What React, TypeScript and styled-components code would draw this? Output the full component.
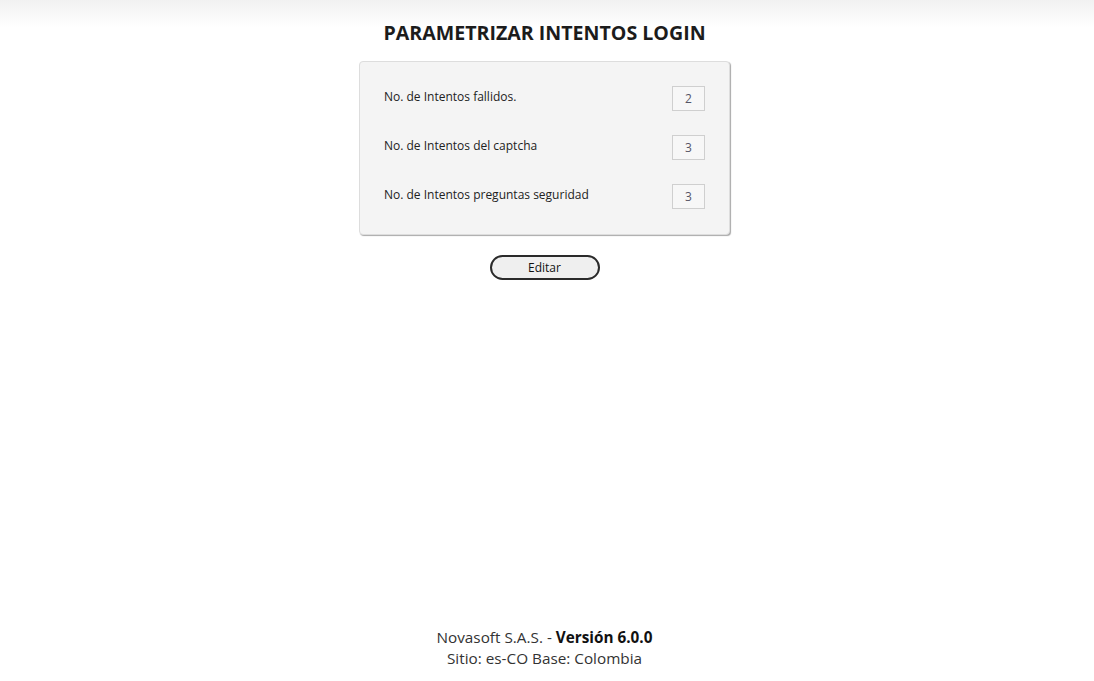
import React from "react";
import styled, { createGlobalStyle } from "styled-components";

const GlobalStyle = createGlobalStyle`
  html, body {
    margin: 0;
    padding: 0;
    background: #ffffff;
    font-family: "Open Sans", "Noto Sans", Arial, sans-serif;
    color: #222222;
  }
`;

const Page = styled.div`
  min-height: 681px;
  padding-right: 5px;
  box-sizing: border-box;
  display: flex;
  flex-direction: column;
  align-items: center;
  background: linear-gradient(to bottom, #f1f1f1 0px, #ffffff 28px);
`;

const Title = styled.h1`
  margin: 19px 0 0;
  font-size: 19.6px;
  font-weight: 700;
  color: #1c1c1c;
`;

const Panel = styled.ul`
  list-style: none;
  margin: 15px 0 0;
  padding: 24px 24px 25px 24px;
  width: 371px;
  box-sizing: border-box;
  background: #f4f4f4;
  border: 1px solid #dddddd;
  border-radius: 4px;
  box-shadow: 1px 1px 1px #a9a9a9;
  display: flex;
  flex-direction: column;
  gap: 24px;
`;

const Row = styled.li`
  display: flex;
  align-items: flex-start;
  justify-content: space-between;
  height: 25px;
`;

const Label = styled.span`
  font-size: 12px;
  color: #222222;
  line-height: 21px;
`;

const ValueBox = styled.span`
  width: 33px;
  height: 25px;
  box-sizing: border-box;
  border: 1px solid #cfcfcf;
  background: #f7f7f7;
  display: flex;
  align-items: center;
  justify-content: center;
  font-size: 12px;
  color: #555566;
`;

const EditButton = styled.button`
  margin-top: 20px;
  width: 110px;
  height: 25px;
  border: 2px solid #2a2a2a;
  border-radius: 13px;
  background: #efefef;
  font-family: inherit;
  font-size: 12px;
  color: #111111;
  cursor: pointer;
`;

const Footer = styled.footer`
  margin-top: auto;
  padding-bottom: 12px;
  text-align: center;
  font-size: 15.3px;
  line-height: 21px;
  color: #333333;

  & b {
    color: #111111;
  }
`;

const rows = [
  { label: "No. de Intentos fallidos.", value: 2 },
  { label: "No. de Intentos del captcha", value: 3 },
  { label: "No. de Intentos preguntas seguridad", value: 3 },
];

const App: React.FC = () => {
  return (
    <>
      <GlobalStyle />
      <Page>
        <Title>PARAMETRIZAR INTENTOS LOGIN</Title>
        <Panel>
          {rows.map((r) => (
            <Row key={r.label}>
              <Label>{r.label}</Label>
              <ValueBox>{r.value}</ValueBox>
            </Row>
          ))}
        </Panel>
        <EditButton>Editar</EditButton>
        <Footer>
          Novasoft S.A.S. - <b>Versión 6.0.0</b>
          <br />
          Sitio: es-CO Base: Colombia
        </Footer>
      </Page>
    </>
  );
};

export default App;
